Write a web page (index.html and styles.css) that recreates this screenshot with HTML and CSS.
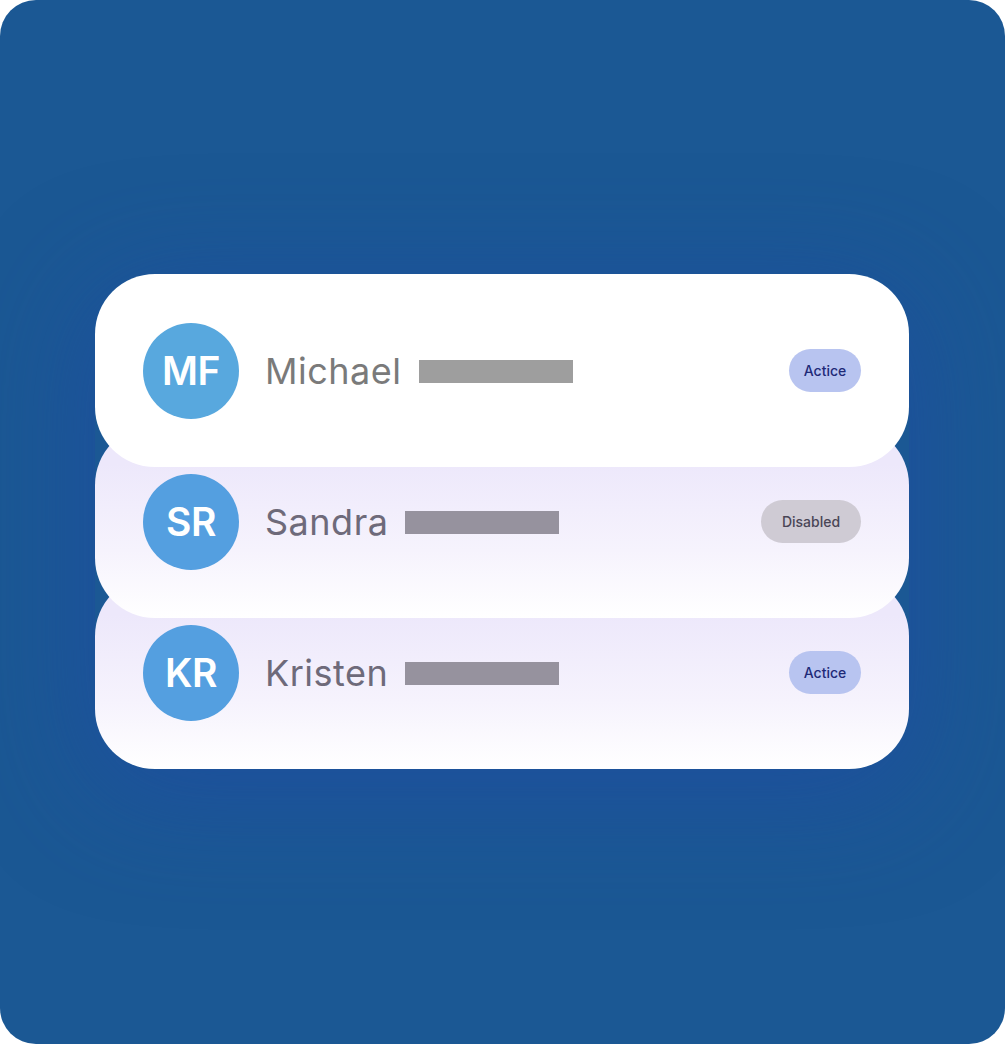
FILE: index.html
```html
<!DOCTYPE html>
<html>
<head>
<meta charset="utf-8">
<link rel="stylesheet" href="styles.css">
</head>
<body>
<div class="frame">
  <div class="stack">
    <div class="card card-top">
      <div class="avatar av1">MF</div>
      <div class="name n1">Michael</div>
      <div class="bar b1"></div>
      <div class="badge active">Actice</div>
    </div>
    <div class="card card-mid">
      <div class="avatar av2">SR</div>
      <div class="name n2">Sandra</div>
      <div class="bar b2"></div>
      <div class="badge disabled">Disabled</div>
    </div>
    <div class="card card-bot">
      <div class="avatar av2">KR</div>
      <div class="name n2">Kristen</div>
      <div class="bar b2"></div>
      <div class="badge active">Actice</div>
    </div>
  </div>
</div>
</body>
</html>
```
FILE: styles.css
```css
html, body {
  margin: 0;
  padding: 0;
  background: #ffffff;
}
.frame {
  width: 1005px;
  height: 1044px;
  border-radius: 36px;
  background: #1b5894;
  box-sizing: border-box;
  padding-top: 274px;
  padding-left: 95px;
  overflow: hidden;
}
.stack {
  width: 814px;
  display: flex;
  flex-direction: column;
  border-radius: 60px;
  box-shadow: 0 20px 110px 10px rgba(32, 72, 168, 0.5);
}
.card {
  height: 193px;
  border-radius: 60px;
  box-sizing: border-box;
  padding: 0 48px;
  display: flex;
  align-items: center;
  position: relative;
}
.card + .card {
  margin-top: -42px;
}
.card-top {
  background: #ffffff;
  z-index: 3;
}
.card-mid {
  background: linear-gradient(180deg, #ede8fb 0%, #ede8fb 20%, #f6f3fd 65%, #ffffff 100%);
  z-index: 2;
}
.card-bot {
  background: linear-gradient(180deg, #ede8fb 0%, #ede8fb 20%, #f6f3fd 65%, #ffffff 100%);
  z-index: 1;
}
.avatar {
  width: 96px;
  height: 96px;
  border-radius: 50%;
  flex: none;
  display: flex;
  align-items: center;
  justify-content: center;
  color: #ffffff;
  font-family: "Inter", "DejaVu Sans", sans-serif;
  font-weight: 600;
  font-size: 39px;
  letter-spacing: -0.5px;
}
.av1 { background: #58a8de; }
.av2 { background: #549fe0; }
.name {
  margin-left: 26px;
  font-family: "Inter", "DejaVu Sans", sans-serif;
  font-size: 36px;
  font-weight: 400;
  letter-spacing: 0.5px;
}
.n1 { color: #7a7a7a; }
.n2 { color: #6e6a7a; }
.bar {
  width: 154px;
  height: 23px;
  margin-left: 17px;
  margin-top: 2px;
}
.b1 { background: #9e9e9e; }
.b2 { background: #96929e; }
.badge {
  margin-left: auto;
  height: 43px;
  border-radius: 22px;
  display: flex;
  align-items: center;
  justify-content: center;
  font-family: "Inter", "DejaVu Sans", sans-serif;
  font-size: 14px;
  font-weight: 500;
}
.active {
  width: 72px;
  background: #b8c4f0;
  color: #1e2a78;
}
.disabled {
  width: 100px;
  background: #cfcbd4;
  color: #4a4656;
}
```
